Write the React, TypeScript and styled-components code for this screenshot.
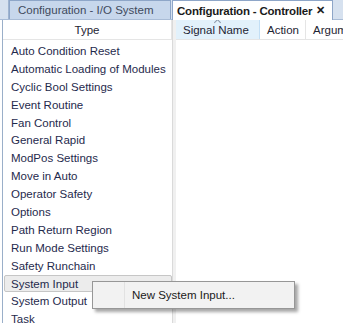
import styled, { createGlobalStyle } from "styled-components";

const items = [
  "Auto Condition Reset",
  "Automatic Loading of Modules",
  "Cyclic Bool Settings",
  "Event Routine",
  "Fan Control",
  "General Rapid",
  "ModPos Settings",
  "Move in Auto",
  "Operator Safety",
  "Options",
  "Path Return Region",
  "Run Mode Settings",
  "Safety Runchain",
  "System Input",
  "System Output",
  "Task",
];

const columns = [
  { title: "Signal Name", width: 84, hot: true },
  { title: "Action", width: 46, hot: false },
  { title: "Arguments", width: 80, hot: false },
];

export default function App() {
  return (
    <>
      <Global />
      <Screen>
        <TabStrip>
          <TabGap />
          <Tab>Configuration - I/O System</Tab>
          <Tab $active>
            Configuration - Controller
            <Close>✕</Close>
          </Tab>
        </TabStrip>
        <Panes>
          <LeftPane>
            <HeaderRow>
              <HeaderCell $center>Type</HeaderCell>
            </HeaderRow>
            <List>
              {items.map((item) => (
                <Item key={item} $selected={item === "System Input"}>
                  {item}
                </Item>
              ))}
            </List>
            <Menu>
              <MenuGutter />
              <MenuText>New System Input...</MenuText>
            </Menu>
          </LeftPane>
          <RightPane>
            <HeaderRow>
              {columns.map((c) => (
                <HeaderCell key={c.title} $hot={c.hot} style={{ width: c.width }}>
                  {c.hot && <SortMark />}
                  {c.title}
                </HeaderCell>
              ))}
            </HeaderRow>
          </RightPane>
        </Panes>
      </Screen>
    </>
  );
}

const Global = createGlobalStyle`
  html, body {
    margin: 0;
    padding: 0;
    background: #ffffff;
  }
  body {
    font-family: "Liberation Sans", Arial, sans-serif;
    font-size: 11.5px;
  }
`;

const Screen = styled.div`
  width: 343px;
  height: 323px;
  overflow: hidden;
  display: flex;
  flex-direction: column;
  background: #fff;
`;

const TabStrip = styled.div`
  height: 20px;
  flex: none;
  display: flex;
  align-items: flex-end;
  background: #d6e1ef;
  border-bottom: 1px solid #a9bcd6;
  box-sizing: border-box;
`;

const TabGap = styled.div`
  width: 9px;
  height: 20px;
  border-right: 1px solid #9fb4d0;
  box-sizing: border-box;
`;

const Tab = styled.div<{ $active?: boolean }>`
  height: ${(p) => (p.$active ? "20px" : "19px")};
  box-sizing: border-box;
  padding: 0 ${(p) => (p.$active ? "4px" : "7px")} 0 ${(p) => (p.$active ? "4px" : "8px")};
  width: ${(p) => (p.$active ? "161px" : "162px")};
  display: flex;
  align-items: center;
  white-space: nowrap;
  font-size: ${(p) => (p.$active ? "11.5px" : "11.5px")};
  letter-spacing: ${(p) => (p.$active ? "-0.2px" : "0")};
  font-weight: ${(p) => (p.$active ? 700 : 400)};
  color: ${(p) => (p.$active ? "#1a1a1a" : "#3f4a5c")};
  background: ${(p) => (p.$active ? "#ffffff" : "#c7d7ec")};
  border: 1px solid #8ea6c8;
  border-bottom: none;
  margin-left: ${(p) => (p.$active ? "1px" : "0")};
  margin-bottom: ${(p) => (p.$active ? "-1px" : "0")};
`;

const Close = styled.span`
  margin-left: 4px;
  font-size: 11px;
  font-weight: 700;
`;

const Panes = styled.div`
  flex: 1;
  display: flex;
`;

const LeftPane = styled.div`
  position: relative;
  width: 171px;
  flex: none;
  border-left: 1px solid #9aafc9;
  margin-left: 2px;
  border-right: 1px solid #dadada;
  box-sizing: border-box;
  display: flex;
  flex-direction: column;
`;

const RightPane = styled.div`
  flex: 1;
  border-left: 3px solid #f0f0f0;
  display: flex;
  flex-direction: column;
`;

const HeaderRow = styled.div`
  height: 20px;
  flex: none;
  display: flex;
  border-bottom: 1px solid #e5e5e5;
  background: #fff;
  box-sizing: border-box;
`;

const HeaderCell = styled.div<{ $center?: boolean; $hot?: boolean }>`
  position: relative;
  flex: ${(p) => (p.$center ? 1 : "none")};
  display: flex;
  align-items: center;
  justify-content: ${(p) => (p.$center ? "center" : "flex-start")};
  padding-left: ${(p) => (p.$center ? "0" : "7px")};
  box-sizing: border-box;
  color: #1e2433;
  font-size: 11.5px;
  white-space: nowrap;
  overflow: hidden;
  border-right: 1px solid ${(p) => (p.$hot ? "#c3dff5" : "#e5e5e5")};
  background: ${(p) => (p.$hot ? "#e2f1fb" : "#fff")};
`;

const SortMark = styled.span`
  position: absolute;
  left: 39px;
  top: 0px;
  width: 4px;
  height: 4px;
  border-left: 1px solid #8a97a8;
  border-top: 1px solid #8a97a8;
  transform: rotate(45deg);
`;

const List = styled.div`
  padding-top: 2px;
  display: flex;
  flex-direction: column;
`;

const Item = styled.div<{ $selected?: boolean }>`
  height: 17.9px;
  line-height: 16px;
  box-sizing: border-box;
  padding-left: 6px;
  margin-left: 1px;
  color: #1f2a4d;
  white-space: nowrap;
  border: 1px solid ${(p) => (p.$selected ? "#c6c6c6" : "transparent")};
  background: ${(p) => (p.$selected ? "#ececec" : "transparent")};
  border-radius: 2px;
`;

const Menu = styled.div`
  position: absolute;
  left: 89px;
  top: 261px;
  width: 203px;
  height: 28px;
  display: flex;
  align-items: center;
  background: #f2f2f2;
  border: 1px solid #979797;
  box-sizing: border-box;
  box-shadow: 3px 3px 3px rgba(0, 0, 0, 0.35);
  z-index: 2;
`;

const MenuGutter = styled.div`
  width: 32px;
  height: 100%;
  border-right: 1px solid #e2e2e2;
  box-sizing: border-box;
`;

const MenuText = styled.div`
  padding-left: 7px;
  color: #1a1a1a;
  font-size: 11.5px;
  white-space: nowrap;
`;
